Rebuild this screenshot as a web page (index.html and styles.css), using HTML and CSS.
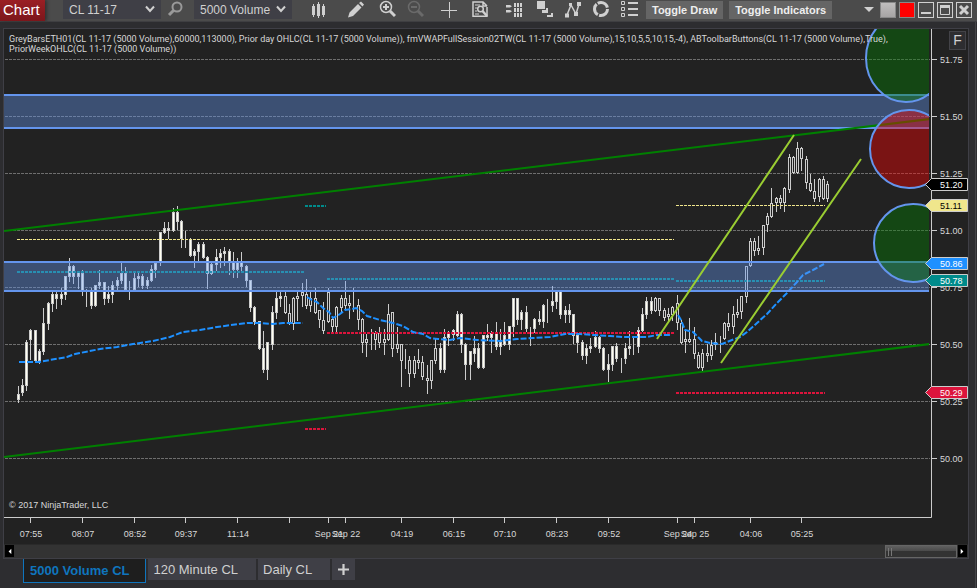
FILE: index.html
```html
<!DOCTYPE html>
<html lang="en">

<head>
  <meta charset="UTF-8">
  <meta name="viewport" content="width=device-width, initial-scale=1.0">
  <title>Chart - CL 11-17</title>
  <link rel="stylesheet" href="styles.css">
</head>

<body>
  <header class="toolbar">
    <h1>Chart</h1>

    <div class="picker">
      <select aria-label="Instrument">
        <option>CL 11-17</option>
      </select>
      <svg viewBox="0 0 10 8"><path d="M1 1.5 5 6 9 1.5" /></svg>
    </div>
    <button class="icon search" aria-label="Search instrument">
      <svg viewBox="0 0 18 18"><circle cx="11" cy="7" r="4.5" fill="none" stroke-width="2" /><path d="M7.5 10.5 3 15" stroke-width="3" /></svg>
    </button>
    <div class="picker">
      <select aria-label="Interval">
        <option>5000 Volume</option>
      </select>
      <svg viewBox="0 0 10 8"><path d="M1 1.5 5 6 9 1.5" /></svg>
    </div>

    <nav class="tools">
      <button class="icon" aria-label="Chart style">
        <svg viewBox="0 0 18 18"><path class="solid" d="M2 6h3v9H2zM7 4h3v12H7zM12 6h3v9h-3zM3 4h1v13H3zM8 2h1v16H8zM13 4h1v13h-1z" /></svg>
      </button>
      <button class="icon gap-l" aria-label="Drawing tools">
        <svg viewBox="0 0 18 18"><path class="solid" d="M1 17.5 2.5 12.5 11 4l3.5 3.5L6 16zM12 3l2-1.5 3 3L15.5 6.500z" /></svg>
      </button>
      <button class="icon gap-s" aria-label="Zoom in">
        <svg viewBox="0 0 18 18"><circle cx="8" cy="7" r="5.500" fill="none" stroke-width="1.500" /><path d="M5 7h6M8 4v6" stroke-width="2" /><path d="m12 11 5 5" stroke-width="3" /></svg>
      </button>
      <button class="icon off" aria-label="Zoom out" disabled>
        <svg viewBox="0 0 18 18"><circle cx="8" cy="7" r="5.500" fill="none" stroke-width="1.500" /><path d="M5 7h6" stroke-width="2" /><path d="m12 11 5 5" stroke-width="3" /></svg>
      </button>
      <button class="icon gap-m" aria-label="Crosshair">
        <svg viewBox="0 0 18 18"><path class="solid" d="M1 10h16v1H1zM9 2h1v16H9z" /></svg>
      </button>
      <button class="icon gap-s" aria-label="Data box">
        <svg viewBox="0 0 18 18"><path d="M16 7V16.200H2V2h10l4 4M12 2v4h4" fill="none" stroke-width="1.500" /><path d="M4 5h5M4 8h2M4 11h2M4 14h4" /><circle cx="9.500" cy="9" r="2.800" fill="none" stroke-width="1.500" /><path d="m11.500 11 4.500 5" stroke-width="2.500" /></svg>
      </button>
      <button class="icon gap-m" aria-label="Chart trader">
        <svg viewBox="0 0 18 18"><path class="solid" d="M1 5h4l2 1.200L5 7.500H1zM1 10h4l2 1.200-2 1.300H1zM9 3h2v4H9zM12 3h2v4h-2zM15 3h2v4h-2zM9 8h2v4H9zM12 8h2v4h-2zM15 8h2v4h-2zM9 13h2v4H9zM12 13h2v4h-2zM15 13h2v4h-2z" /></svg>
      </button>
      <button class="icon gap-s" aria-label="Data series">
        <svg viewBox="0 0 18 18"><path class="solid" d="M1 1h8v8H1zM10 8h2v5H6v-3h4zM15 13h2v4h-6v-2h4z" /></svg>
      </button>
      <button class="icon" aria-label="Indicators">
        <svg viewBox="0 0 18 18"><path d="m3 15 4-10 5 9 3-10" fill="none" stroke-width="1.500" /><path class="solid" d="M1 13.500h4v4H1zM5 3h3v3H5zM10 12h4v4h-4zM13 2h4v4h-4z" /></svg>
      </button>
      <button class="icon" aria-label="Strategies">
        <svg viewBox="0 0 18 18"><circle cx="9" cy="9" r="6.500" fill="none" stroke-width="3" pathLength="40" stroke-dasharray="12 1.300" /></svg>
      </button>
      <button class="icon" aria-label="Properties">
        <svg viewBox="0 0 18 18"><path d="M1.500 1.500h3v3h-3zM1.500 7.500h3v3h-3zM1.500 13.500h3v3h-3z" fill="none" /><path d="M8 3h10M8 9h10M8 15h10" stroke-width="2" /></svg>
      </button>
    </nav>

    <div class="toggles">
      <button>Toggle Draw</button>
      <button>Toggle Indicators</button>
    </div>

    <div class="window-buttons">
      <button class="link-menu" aria-label="Link menu"><svg viewBox="0 0 10 6"><path class="solid" d="M0 0h10L5 5z" /></svg></button>
      <button class="link grey" aria-label="Instrument link"></button>
      <button class="link red" aria-label="Interval link"></button>
      <button class="win" aria-label="Minimize"><svg viewBox="0 0 14 14"><path d="M2 10h10" stroke-width="2" /></svg></button>
      <button class="win" aria-label="Maximize"><svg viewBox="0 0 14 14"><path class="solid" d="M2 2h10v3H2z" /><path d="M2.500 2.500h9v9h-9z" fill="none" /></svg></button>
      <button class="win" aria-label="Close"><svg viewBox="0 0 14 14"><path d="m3 3 8 8M11 3l-8 8" stroke-width="3" /></svg></button>
    </div>
  </header>

  <main>
    <section class="panel">
      <svg class="chart" viewBox="4 29 964 515" role="img" aria-label="CL 11-17 price chart">
        <defs>
          <clipPath id="plot"><rect x="4" y="29" width="925" height="488" /></clipPath>
        </defs>

        <g id="grid"></g>
        <g id="candles"></g>

        <g clip-path="url(#plot)">
          <g class="high">
            <path d="M17 239.500H674M676 205.500H825" />
          </g>
          <g class="open">
            <path d="M17 272H304M305 206H326M327 279H674M676 281H825" />
          </g>
          <g class="low">
            <path d="M305 429H326M327 333H674M676 393H825" />
          </g>
          <g class="vwap">
            <polyline points="19,362 39,362 50,360 67,357 75,354 100,349 117,347 133,344 153,341 170,337 183,332 200,330 217,327 239,324 247,323 260,323 273,324 283,323 303,323" />
            <polyline points="307,297 312,300 317,302 323,308 329,312 333,318 340,314 345,310 352,309 356,308 362,311 367,316 380,320 393,323 403,326 413,332 423,334 430,338 438,339 450,340 460,338 477,340 500,341 517,339 533,338 550,337 565,334 580,334 593,335 610,336 623,337 647,337 657,335 670,335" />
            <polyline points="678,315 681,320 685,330 693,332 702,341 710,343 722,344 732,340 740,337 747,332 757,323 767,314 777,303 787,293 797,282 803,275 813,270 824,264" />
          </g>

          <g class="zone">
            <rect x="4" y="95" width="925" height="33" />
            <path d="M4 95H929M4 128H929" />
            <rect x="4" y="262" width="925" height="29" />
            <path d="M4 262H929M4 291H929" />
          </g>

          <path class="trend" d="M4 231 930 119M4 457 930 344" />
          <path class="channel" d="M657 339 794 135M721 363 861 159" />

          <ellipse class="target" cx="906" cy="58" rx="40" ry="44" />
          <circle class="target stop" cx="909" cy="149" r="39" />
          <circle class="target" cx="913" cy="243" r="39" />
        </g>

        <g id="axes"></g>
        <g id="tags"></g>

        <text class="indicators" x="9" y="42">GreyBarsETH01(CL 11-17 (5000 Volume),60000,113000), Prior day OHLC(CL 11-17 (5000 Volume)), fmVWAPFullSession02TW(CL 11-17 (5000 Volume),15,10,5,5,10,15,-4), ABToolbarButtons(CL 11-17 (5000 Volume),True),</text>
        <text class="indicators" x="9" y="52">PriorWeekOHLC(CL 11-17 (5000 Volume))</text>
        <text x="9" y="508">© 2017 NinjaTrader, LLC</text>
      </svg>

      <button class="fixed-scale">F</button>

      <div class="scrollbar">
        <button aria-label="Scroll left"><svg viewBox="0 0 10 12"><path d="M7 3v6L4 6z" /></svg></button>
        <div class="thumb"></div>
        <button aria-label="Scroll right"><svg viewBox="0 0 10 12"><path d="M3 3v6l3-3z" /></svg></button>
      </div>
    </section>

    <nav class="tabs">
      <button class="active">5000 Volume CL</button>
      <button>120 Minute CL</button>
      <button>Daily CL</button>
      <button class="add" aria-label="Add tab"><svg viewBox="0 0 10 10"><path d="M0 5h10M5 0v10" /></svg></button>
    </nav>
  </main>

  <script src="chart.js"></script>
</body>

</html>
```
FILE: styles.css
```css
* {
  box-sizing: border-box;
}

body {
  margin: 0;
  min-height: 100vh;
  display: flex;
  flex-direction: column;
  font-family: "Liberation Sans", Arial, sans-serif;
  font-size: 12px;
  background: #2d2d30;
  color: #d0d0d0;
}

button,
select {
  font: inherit;
  color: inherit;
  border: 0;
  padding: 0;
  margin: 0;
  background: none;
}

svg {
  display: block;
}

/* Toolbar */

.toolbar {
  display: flex;
  height: 22px;
  padding-right: 5px;
  background: #4b4b4b;
  border-bottom: 1px solid #3f3f42;
}

h1 {
  width: 45px;
  height: 21px;
  margin: 0 18px 0 0;
  padding-left: 3px;
  font-size: 15px;
  font-weight: 400;
  line-height: 20px;
  color: #fff;
  background: linear-gradient(#9a1f24, #7c161b);
  box-shadow: 2px 0 3px #333;
}

.picker {
  position: relative;
  width: 98px;
  height: 19px;
  background: #3f3f46;
}

.picker select {
  appearance: none;
  width: 100%;
  height: 19px;
  padding-left: 6px;
}

.picker svg {
  position: absolute;
  top: 5px;
  right: 6px;
  width: 10px;
  height: 8px;
  fill: none;
  stroke: #d0d0d0;
  stroke-width: 2;
  pointer-events: none;
}

.icon {
  flex: none;
  width: 18px;
  height: 18px;
  stroke: #d0d0d0;
}

.icon:disabled {
  stroke: #6a6a6a;
}

.solid {
  fill: #d0d0d0;
  stroke: none;
}

.search {
  margin: 0 10px 0 5px;
  stroke: #999;
}

.tools {
  display: flex;
  gap: 10px;
  margin: 0 8px 0 18px;
}

.gap-s {
  margin-left: 3px;
}

.gap-m {
  margin-left: 6px;
}

.gap-l {
  margin-left: 9px;
}

.toggles {
  display: flex;
  gap: 6px;
}

.toggles button {
  height: 18px;
  margin-top: 1px;
  padding: 0 6px;
  font-size: 11px;
  font-weight: 700;
  color: #eee;
  white-space: nowrap;
  background: #656565;
}

.window-buttons {
  display: flex;
  gap: 3px;
  margin: 2px 0 0 auto;
}

.window-buttons button {
  width: 16px;
  height: 16px;
}

.window-buttons .link-menu {
  width: 10px;
  margin-right: 3px;
}

.link-menu svg {
  width: 10px;
  height: 6px;
}

.link {
  border: 1px solid #888;
}

.grey {
  background: linear-gradient(#c0bebe, #a6a4a4);
}

.red {
  background: #f00;
}

.win {
  border: 1px solid #d0d0d0;
  stroke: #d0d0d0;
}

/* Chart panel */

main {
  flex: 1;
  margin-right: 1px;
  padding: 6px 6px 0 3px;
  border-right: 1px solid #434346;
}

.panel {
  position: relative;
  border: 1px solid #3f3f46;
  background: #222;
}

.chart {
  width: 100%;
  height: auto;
}

.chart text {
  font-size: 9px;
  fill: #d8d8d8;
}

/* Roboto runs narrower, so the long list ends before the price axis */
.indicators {
  font-family: Roboto, "Liberation Sans", sans-serif;
}

.grid {
  stroke: #6e6e6e;
  stroke-dasharray: 3 1;
}

.axis {
  stroke: #ccc;
  fill: none;
}

.x-label {
  text-anchor: middle;
}

.wick {
  fill: #ccc;
}

.bar {
  stroke: #ccc;
  fill: #fffff0;
}

.bar.hollow {
  fill: #222;
}

.high,
.open,
.low {
  stroke-width: 2;
  stroke-dasharray: 3 1;
}

.high {
  stroke: khaki;
  stroke-width: 1;
}

.open {
  stroke: darkcyan;
}

.low {
  stroke: crimson;
}

.vwap {
  fill: none;
  stroke: dodgerblue;
  stroke-width: 2;
  stroke-dasharray: 6 2;
}

.zone {
  fill: rgb(100 149 237 / 40%);
}

.zone path {
  stroke: cornflowerblue;
  stroke-width: 2;
}

.trend {
  stroke: green;
  stroke-width: 2;
}

.channel {
  stroke: yellowgreen;
  stroke-width: 2;
}

.target {
  fill: rgb(0 128 0 / 40%);
  stroke: cornflowerblue;
  stroke-width: 2;
}

.stop {
  fill: rgb(255 0 0 / 40%);
}

.tag {
  stroke: #ccc;
}

.chart .tag-text {
  fill: #fff;
}

.chart .dark {
  fill: #000;
}

.fixed-scale {
  position: absolute;
  top: 2px;
  right: 2px;
  width: 17px;
  height: 19px;
  font-size: 14px;
  line-height: 17px;
  background: #2d2d30;
  border: 1px solid #434348;
}

.scrollbar {
  display: flex;
  height: 14px;
  padding: 0 1px;
  background: #333;
  border-top: 1px solid #2a2a2a;
}

.scrollbar button {
  width: 9px;
  height: 12px;
  background: #000;
}

.scrollbar path {
  fill: #fff;
}

.thumb {
  width: 72px;
  margin: 0 1px 0 auto;
  border: 1px solid #666;
  background:
    linear-gradient(#777, #777) 2px 2px / 1px 8px no-repeat,
    linear-gradient(#777, #777) 5px 2px / 1px 8px no-repeat,
    linear-gradient(#606060, #484848 50%, #333 50%);
}

/* Tabs */

.tabs {
  display: flex;
  gap: 2px;
  margin-left: 20px;
  font-size: 13px;
}

.tabs button {
  height: 21px;
  padding: 0 18px 0 5px;
  background: #3f3f46;
}

.tabs .active {
  height: 24px;
  padding: 0 16px 0 6px;
  font-weight: 700;
  color: #0f75bd;
  background: #1e1e1e;
  border: 1px solid #0f75bd;
  border-top: 0;
}

.tabs .add {
  width: 23px;
  padding: 0 6px;
  stroke: #d0d0d0;
  stroke-width: 2;
}
```
FILE: chart.js
```js
const NS = 'http://www.w3.org/2000/svg';

function add(parent, tag, attributes, text) {
  const el = document.createElementNS(NS, tag);
  for (const [name, value] of Object.entries(attributes)) {
    el.setAttribute(name, value);
  }
  if (text !== undefined) {
    el.textContent = text;
  }
  parent.append(el);
}

// x, high, body top, body bottom, low
const bars = [
  [18, 386, 394, 400, 402], [22, 379, 385, 393, 395], [26, 340, 342, 386, 390], [30, 329, 330, 340, 359],
  [35, 330, 330, 361, 361], [39, 349, 351, 361, 363], [43, 308, 323, 352, 354], [48, 302, 303, 324, 329],
  [52, 292, 294, 304, 311], [56, 292, 294, 299, 308], [61, 288, 294, 299, 304], [65, 276, 276, 295, 299],
  [69, 258, 266, 277, 281], [73, 265, 266, 277, 283], [78, 271, 272, 277, 288], [82, 270, 273, 291, 295],
  [86, 289, 289, 290, 306], [91, 288, 291, 306, 308], [95, 285, 285, 306, 306], [99, 270, 282, 286, 288],
  [104, 282, 282, 299, 304], [108, 286, 294, 299, 302], [112, 281, 285, 295, 302], [117, 277, 280, 286, 290],
  [121, 263, 273, 281, 283], [125, 267, 273, 290, 290], [129, 281, 289, 290, 299], [134, 273, 278, 290, 290],
  [138, 272, 276, 279, 286], [142, 274, 276, 286, 288], [147, 277, 280, 286, 288], [151, 265, 269, 281, 281],
  [155, 262, 263, 270, 277], [160, 232, 232, 262, 265], [164, 222, 228, 233, 233], [168, 222, 228, 231, 238],
  [173, 208, 212, 231, 231], [177, 206, 212, 222, 229], [181, 220, 221, 239, 247], [185, 231, 239, 240, 247],
  [190, 238, 239, 256, 256], [194, 249, 251, 256, 267], [198, 242, 244, 252, 262], [203, 242, 244, 258, 258],
  [207, 256, 257, 274, 288], [211, 262, 264, 274, 274], [216, 249, 257, 265, 270], [220, 249, 253, 258, 267],
  [224, 247, 251, 254, 265], [229, 249, 251, 262, 274], [233, 252, 262, 270, 277], [237, 258, 262, 270, 277],
  [241, 252, 262, 267, 271], [246, 265, 266, 281, 286], [250, 280, 280, 308, 311], [254, 306, 307, 322, 324],
  [259, 321, 321, 349, 349], [263, 331, 348, 370, 372], [267, 342, 342, 370, 379], [272, 306, 312, 345, 349],
  [276, 292, 298, 313, 318], [280, 290, 296, 299, 306], [285, 292, 296, 313, 313], [289, 304, 313, 324, 324],
  [293, 297, 298, 324, 329], [297, 290, 296, 299, 320], [302, 283, 292, 296, 306], [306, 279, 294, 306, 308],
  [310, 290, 298, 306, 311], [315, 288, 298, 313, 313], [319, 310, 310, 320, 327], [323, 302, 320, 331, 333],
  [328, 288, 292, 322, 322], [332, 317, 319, 327, 332], [336, 306, 307, 327, 331], [341, 295, 298, 308, 311],
  [345, 281, 298, 306, 308], [349, 295, 303, 306, 318], [353, 288, 303, 304, 311], [358, 299, 305, 320, 329],
  [362, 318, 319, 343, 352], [366, 334, 339, 343, 356], [371, 329, 339, 340, 349], [375, 331, 333, 340, 349],
  [379, 327, 333, 343, 347], [384, 329, 339, 343, 354], [388, 304, 314, 340, 340], [392, 312, 312, 349, 356],
  [397, 327, 344, 349, 352], [401, 344, 344, 361, 386], [405, 349, 360, 361, 368], [409, 356, 360, 374, 386],
  [414, 356, 360, 374, 377], [418, 349, 360, 363, 368], [422, 356, 362, 377, 379], [427, 365, 378, 381, 393],
  [431, 360, 360, 381, 388], [435, 338, 348, 361, 363], [440, 343, 348, 370, 372], [444, 329, 337, 370, 372],
  [448, 331, 333, 338, 345], [453, 329, 330, 335, 340], [457, 311, 314, 336, 336], [461, 313, 314, 345, 352],
  [465, 343, 344, 365, 379], [470, 351, 351, 365, 379], [474, 336, 348, 354, 361], [478, 343, 348, 368, 368],
  [483, 335, 335, 368, 368], [487, 324, 335, 338, 340], [491, 331, 333, 338, 352], [496, 322, 333, 347, 349],
  [500, 329, 342, 347, 354], [504, 322, 335, 345, 345], [509, 326, 326, 345, 349], [513, 298, 298, 327, 336],
  [517, 298, 298, 320, 324], [521, 310, 312, 320, 329], [526, 306, 312, 329, 331], [530, 327, 328, 329, 345],
  [534, 318, 319, 329, 332], [539, 311, 319, 322, 324], [543, 304, 305, 322, 327], [547, 299, 305, 306, 322],
  [552, 286, 301, 306, 311], [556, 291, 291, 302, 308], [560, 291, 291, 315, 318], [565, 306, 310, 315, 322],
  [569, 304, 310, 315, 322], [573, 314, 314, 336, 343], [577, 333, 335, 343, 352], [582, 340, 342, 356, 359],
  [586, 344, 348, 356, 363], [590, 338, 346, 349, 352], [595, 331, 337, 347, 347], [599, 336, 337, 349, 352],
  [603, 347, 348, 370, 370], [608, 354, 364, 370, 381], [612, 346, 346, 365, 370], [616, 343, 346, 359, 361],
  [621, 358, 358, 359, 372], [625, 343, 348, 359, 363], [629, 331, 346, 349, 354], [633, 336, 346, 347, 354],
  [638, 327, 330, 347, 352], [642, 308, 314, 331, 331], [646, 297, 301, 315, 318], [651, 297, 301, 311, 313],
  [655, 297, 298, 311, 311], [659, 298, 298, 311, 315], [664, 308, 310, 318, 320], [668, 308, 314, 317, 320],
  [672, 306, 307, 315, 320], [677, 295, 303, 323, 329], [681, 320, 323, 343, 343], [685, 330, 339, 342, 352],
  [689, 318, 339, 342, 342], [694, 327, 339, 354, 358], [698, 352, 355, 368, 368], [702, 349, 353, 368, 370],
  [707, 344, 353, 356, 361], [711, 340, 345, 356, 359], [715, 333, 342, 345, 349], [720, 336, 341, 342, 352],
  [724, 322, 323, 339, 339], [728, 313, 323, 327, 330], [733, 306, 314, 327, 333], [737, 299, 312, 315, 317],
  [741, 296, 296, 312, 318], [746, 266, 266, 297, 302], [750, 238, 241, 266, 266], [754, 238, 241, 251, 255],
  [758, 236, 248, 251, 254], [763, 225, 225, 248, 254], [767, 213, 216, 225, 231], [771, 188, 203, 217, 217],
  [776, 197, 198, 203, 211], [780, 195, 198, 203, 208], [784, 187, 188, 203, 211], [789, 154, 157, 190, 192],
  [793, 156, 157, 173, 173], [797, 142, 148, 173, 173], [801, 147, 148, 159, 170], [806, 156, 159, 183, 188],
  [810, 174, 183, 191, 191], [814, 179, 191, 199, 201], [819, 178, 179, 197, 201], [823, 176, 179, 199, 199],
  [827, 181, 184, 199, 201]
];

const times = [
  [30, '07:55'], [82, '08:07'], [134, '08:52'], [185, '09:37'], [237, '11:14'], [289, ''],
  [328, 'Sep 21'], [345, 'Sep 22'], [401, '04:19'], [453, '06:15'], [504, '07:10'], [556, '08:23'],
  [608, '09:52'], [677, 'Sep 24'], [694, 'Sep 25'], [750, '04:06'], [801, '05:25']
];

const tags = [
  [280, '50.78', 'darkcyan'], [263, '50.86', 'dodgerblue'], [205, '51.11', 'khaki'],
  [184, '51.20', 'black'], [392, '50.29', 'crimson']
];

const grid = document.querySelector('#grid');
const candles = document.querySelector('#candles');
const axes = document.querySelector('#axes');
const tagLayer = document.querySelector('#tags');

add(axes, 'path', { class: 'axis', d: 'M4 517.5H931.5V29' });

// One grid line every 0.25
for (let i = 0; i < 8; i++) {
  const y = 59 + i * 57;
  add(grid, 'path', { class: 'grid', d: `M5 ${y + 0.5}H930` });
  add(axes, 'path', { class: 'axis', d: `M932 ${y + 0.5}h5` });
  add(axes, 'text', { x: 940, y: y + 4 }, (51.75 - i * 0.25).toFixed(2));
}

for (const [x, label] of times) {
  add(axes, 'path', { class: 'axis', d: `M${x + 0.5} 518v5` });
  add(axes, 'text', { class: 'x-label', x: x + 1, y: 537 }, label);
}

for (const [x, high, top, bottom, low] of bars) {
  // Overnight session bars are drawn hollow
  const hollow = (x >= 285 && x <= 435) || x >= 655;
  add(candles, 'rect', { class: 'wick', x, y: high, width: 1, height: low - high + 1 });
  add(candles, 'rect', { class: hollow ? 'bar hollow' : 'bar', x: x - 0.5, y: top + 0.5, width: 2, height: Math.max(bottom - top - 1, 0) });
}

for (const [y, price, color] of tags) {
  add(tagLayer, 'path', { class: 'tag', fill: color, d: `M925.5 ${y + 0.5}l6 -6h36v12h-36z` });
  add(tagLayer, 'text', { class: color === 'khaki' ? 'tag-text dark' : 'tag-text', x: 940, y: y + 4 }, price);
}
```
